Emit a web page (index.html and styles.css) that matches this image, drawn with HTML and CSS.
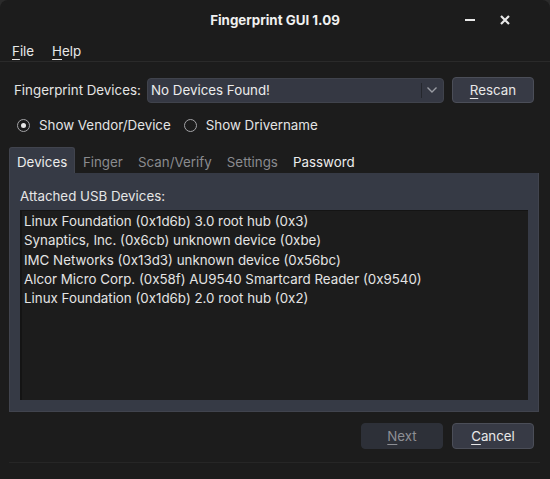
FILE: index.html
```html
<!DOCTYPE html>
<html lang="en">

    <head>
        <meta charset="UTF-8">
        <title>Fingerprint GUI 1.09</title>
        <link rel="stylesheet" href="styles.css">
    </head>

    <body>
        <div class="window">

            <header class="titlebar">
                <span></span>
                <span class="title">Fingerprint GUI 1.09</span>
                <div class="wm-buttons">
                    <svg width="14" height="14" viewBox="0 0 14 14"><rect x="2" y="6" width="10" height="2" fill="#e8e8e8"/></svg>
                    <svg width="14" height="14" viewBox="0 0 14 14"><path d="M3 3 L11 11 M11 3 L3 11" stroke="#e8e8e8" stroke-width="2.2"/></svg>
                </div>
            </header>

            <nav class="menubar">
                <span class="menu-item"><u>F</u>ile</span>
                <span class="menu-item"><u>H</u>elp</span>
            </nav>

            <main class="content">

                <div class="device-row">
                    <label class="row-label">Fingerprint Devices:</label>
                    <div class="combo">
                        <span class="combo-text">No Devices Found!</span>
                        <span class="combo-sep"></span>
                        <svg class="combo-arrow" width="12" height="8" viewBox="0 0 12 8"><path d="M1.5 1.5 L6 6 L10.5 1.5" fill="none" stroke="#9a9ca3" stroke-width="1.4"/></svg>
                    </div>
                    <button class="btn"><u>R</u>escan</button>
                </div>

                <div class="radio-row">
                    <label class="radio checked"><span class="radio-mark"></span>Show Vendor/Device</label>
                    <label class="radio"><span class="radio-mark"></span>Show Drivername</label>
                </div>

                <div class="tabs">
                    <span class="tab active">Devices</span>
                    <span class="tab disabled">Finger</span>
                    <span class="tab disabled">Scan/Verify</span>
                    <span class="tab disabled">Settings</span>
                    <span class="tab">Password</span>
                </div>

                <section class="tab-panel">
                    <div class="panel-label">Attached USB Devices:</div>
                    <ul class="device-list">
                        <li>Linux Foundation (0x1d6b) 3.0 root hub (0x3)</li>
                        <li>Synaptics, Inc. (0x6cb) unknown device (0xbe)</li>
                        <li>IMC Networks (0x13d3) unknown device (0x56bc)</li>
                        <li>Alcor Micro Corp. (0x58f) AU9540 Smartcard Reader (0x9540)</li>
                        <li>Linux Foundation (0x1d6b) 2.0 root hub (0x2)</li>
                    </ul>
                </section>

                <div class="button-row">
                    <button class="btn disabled"><u>N</u>ext</button>
                    <button class="btn"><u>C</u>ancel</button>
                </div>

            </main>

            <div class="bottom-line"></div>
        </div>
    </body>

</html>
```

FILE: styles.css
```css
* {
    padding: 0;
    margin: 0;
    box-sizing: border-box;
}

body {
    width: 550px;
    height: 479px;
    background-color: #2b2b2b;
    font-family: Inter, "Noto Sans", sans-serif;
    font-size: 13.33px;
    color: #e4e4e4;
    overflow: hidden;
}

.window {
    width: 550px;
    height: 479px;
    background-color: #1c1c1c;
    border-radius: 8px 8px 0 0;
    display: flex;
    flex-direction: column;
}

u {
    text-decoration-thickness: 1px;
    text-underline-offset: 3px;
}

/* title bar */

.titlebar {
    height: 40px;
    display: grid;
    grid-template-columns: 1fr auto 1fr;
    align-items: center;
}

.title {
    font-weight: 700;
    color: #f0f0f0;
}

.wm-buttons {
    justify-self: end;
    display: flex;
    gap: 21px;
    padding-right: 38px;
}

/* menu */

.menubar {
    height: 22px;
    display: flex;
    gap: 18px;
    padding: 0 0 0 12px;
    align-items: center;
    border-bottom: 1px solid #2a2a2a;
}

.menu-item {
    color: #e8e8e8;
}

.content {
    padding: 15px 11px 0 9px;
    display: flex;
    flex-direction: column;
}

/* device chooser */

.device-row {
    display: flex;
    align-items: center;
    height: 26px;
}

.row-label {
    width: 138px;
    padding-left: 5px;
}

.combo {
    width: 297px;
    height: 25px;
    background-color: #353843;
    border: 1px solid #40434c;
    border-radius: 4px;
    display: flex;
    align-items: center;
    padding-left: 3px;
}

.combo-text {
    flex: 1;
    color: #ececec;
}

.combo-sep {
    width: 1px;
    height: 15px;
    background-color: #25272d;
}

.combo-arrow {
    margin: 0 5px 0 4px;
}

.btn {
    width: 82px;
    height: 26px;
    margin-left: 8px;
    font: inherit;
    color: #e8e8e8;
    background-color: #373a45;
    border: 1px solid #4b4e58;
    border-radius: 4px;
}

.btn.disabled {
    background-color: #2d3038;
    border-color: #2d3038;
    color: #8d8f95;
}

/* radios */

.radio-row {
    display: flex;
    gap: 13px;
    height: 20px;
    margin-top: 12px;
    padding-left: 8px;
    align-items: center;
}

.radio {
    display: flex;
    align-items: center;
    gap: 9px;
}

.radio-mark {
    width: 13px;
    height: 13px;
    border: 1.5px solid #a3a3a6;
    border-radius: 50%;
    display: flex;
    align-items: center;
    justify-content: center;
}

.radio.checked .radio-mark::after {
    content: "";
    width: 5px;
    height: 5px;
    border-radius: 50%;
    background-color: #e8e8e8;
}

/* tabs */

.tabs {
    display: flex;
    margin-top: 12px;
    height: 26px;
}

.tab {
    display: flex;
    align-items: center;
    padding: 3px 7.6px 0;
    color: #ececec;
}

.tab.active {
    background-color: #363a45;
    border: 1px solid #41444e;
    border-bottom: none;
    border-radius: 3px 3px 0 0;
    padding: 2px 7px 0;
}

.tab.disabled {
    color: #8a8b8f;
}

.tab-panel {
    height: 239px;
    background-color: #363a45;
    border: 1px solid #41444e;
    border-top: none;
    padding: 15px 10px 11px 10px;
    display: flex;
    flex-direction: column;
}

.panel-label {
    height: 22px;
    color: #e6e6e6;
}

.device-list {
    flex: 1;
    list-style: none;
    background-color: #1c1c1c;
    border-top: 1px solid #141414;
    border-left: 2px solid #141414;
    padding: 2px 0 0 2px;
}

.device-list li {
    height: 19.25px;
    line-height: 17px;
}

/* dialog buttons */

.button-row {
    display: flex;
    justify-content: flex-end;
    margin-top: 11px;
    padding-right: 5px;
}

.button-row .btn {
    margin-left: 9px;
}

.bottom-line {
    margin: 13px 10px 0 9px;
    height: 1px;
    background-color: #262626;
}
```
